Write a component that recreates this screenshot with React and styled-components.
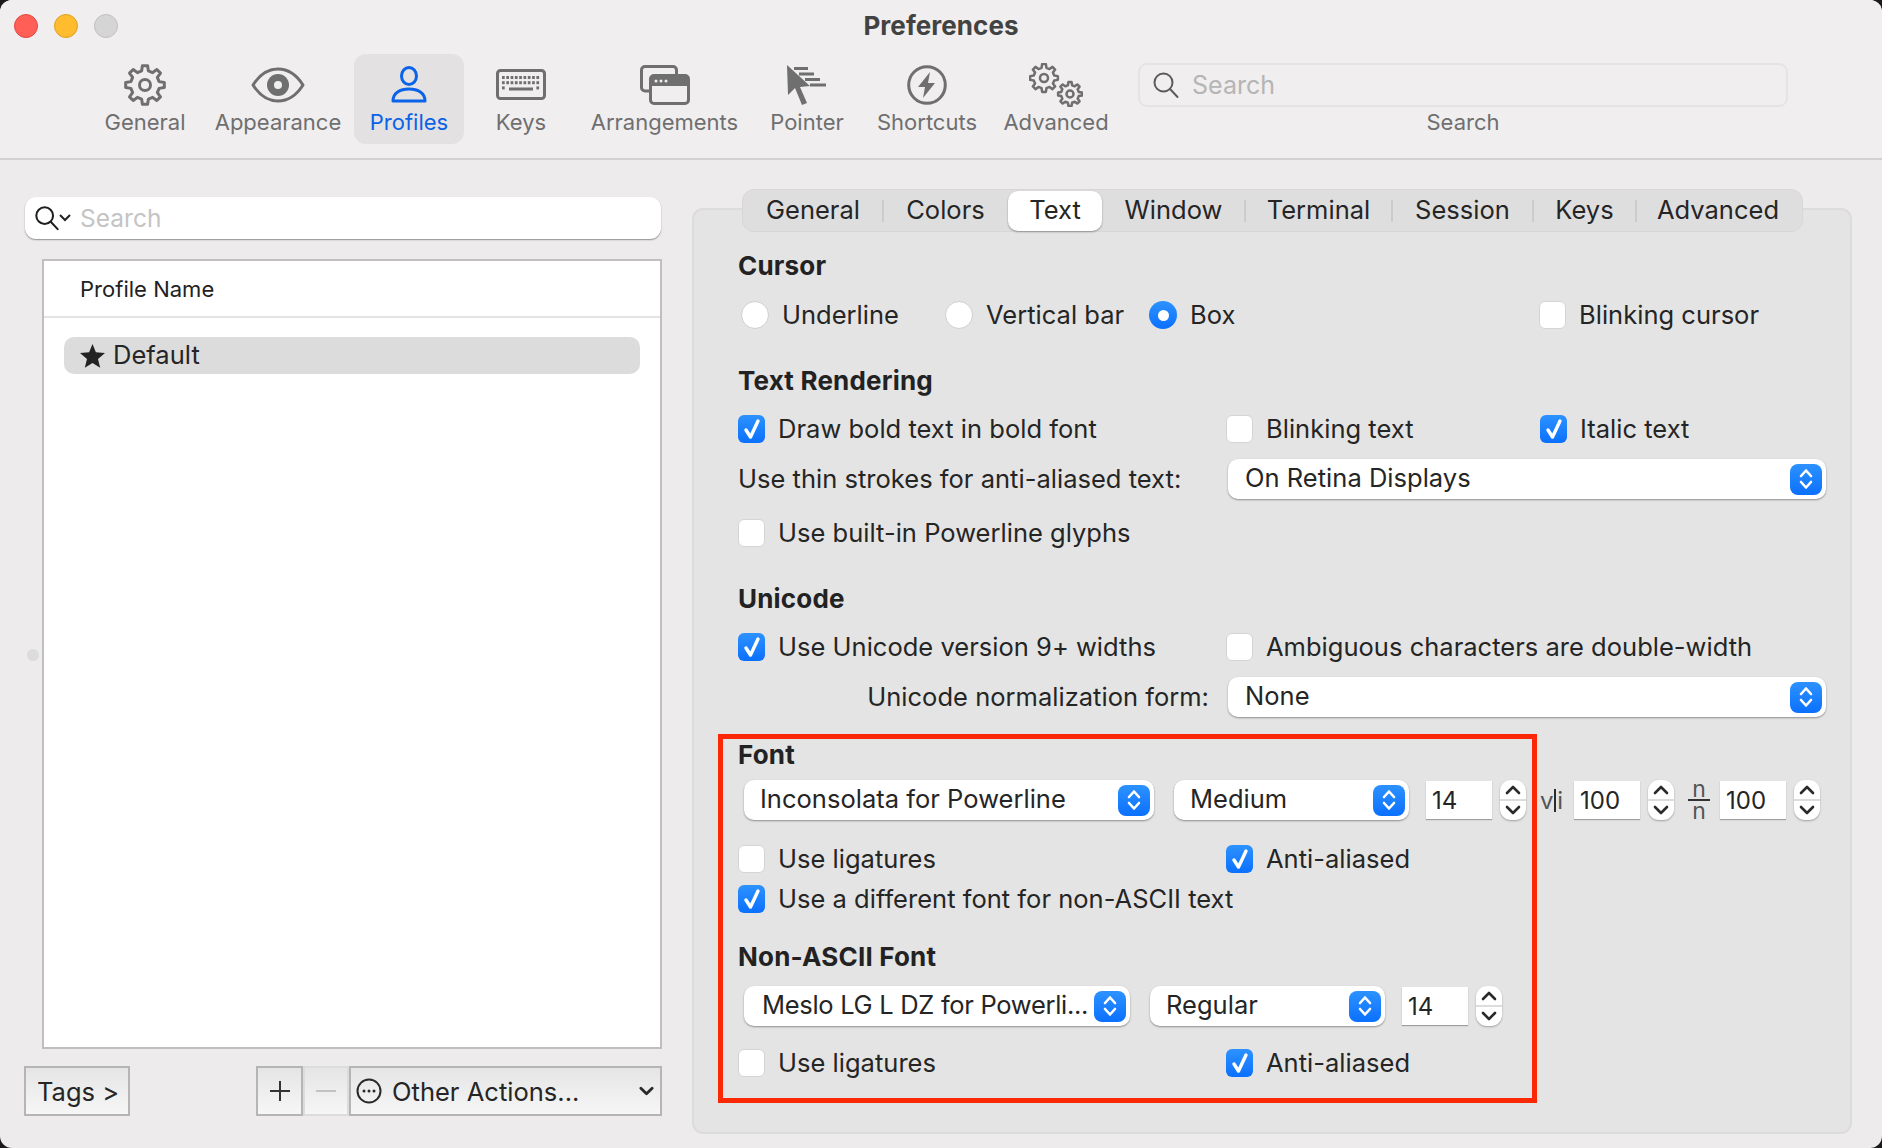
import React from "react";
import styled, { createGlobalStyle } from "styled-components";

const Global = createGlobalStyle`
  html, body { margin: 0; padding: 0; background: #1a1a1a; }
  * { box-sizing: border-box; }
`;

const ICON = "#6f6f6f";
const FONT = `Inter, "Liberation Sans", sans-serif`;

const Window = styled.div`
  width: 1882px;
  height: 1148px;
  overflow: hidden;
  border-radius: 12px;
  background: #edebec;
  font-family: ${FONT};
  color: #252525;
  font-size: 25.5px;
  letter-spacing: 0.02px;
  position: relative;
`;
const Toolbar = styled.header`
  height: 160px;
  background: #f0eeef;
  border-bottom: 2px solid #d2d0d1;
`;
const TitleBar = styled.div`
  height: 54px;
  padding: 0 14px;
  display: grid;
  grid-template-columns: 1fr auto 1fr;
  align-items: center;
`;
const Lights = styled.div`
  display: flex;
  gap: 16px;
  margin-top: -2px;
`;
const Light = styled.span`
  width: 24px;
  height: 24px;
  border-radius: 50%;
  background: ${(p) => p.$c};
  border: 1px solid ${(p) => p.$b};
`;
const Title = styled.div`
  font-weight: 700;
  font-size: 26px;
  letter-spacing: 0.05px;
  color: #424242;
  margin-top: -4px;
`;
const ToolRow = styled.div`
  display: flex;
  padding-left: 88px;
`;
const ToolItem = styled.div`
  width: ${(p) => p.$w}px;
  height: 90px;
  border-radius: 12px;
  background: ${(p) => (p.$active ? "#e3e1e2" : "transparent")};
  color: ${(p) => (p.$active ? "#0a63e8" : ICON)};
  display: flex;
  flex-direction: column;
  align-items: center;
  padding-top: 8px;
  flex: none;
`;
const IconSlot = styled.div`
  height: 46px;
  display: flex;
  align-items: center;
  justify-content: center;
`;
const ToolLabel = styled.div`
  font-size: 22px;
  line-height: 28px;
  letter-spacing: 0;
  white-space: nowrap;
`;
const SearchGroup = styled.div`
  margin-left: 17px;
  width: 650px;
  margin-top: 9px;
  display: flex;
  flex-direction: column;
  align-items: center;
`;
const TopSearch = styled.div`
  width: 100%;
  height: 44px;
  border: 2px solid #e5e3e4;
  border-radius: 9px;
  display: flex;
  align-items: center;
  padding-left: 12px;
  gap: 12px;
  color: #b5b5b5;
  font-size: 25px;
`;
const TopSearchLabel = styled.div`
  font-size: 22px;
  line-height: 28px;
  color: ${ICON};
  margin-top: 1px;
`;
const Main = styled.main`
  display: flex;
  height: 988px;
`;
const Left = styled.section`
  width: 638px;
  margin-left: 24px;
  padding-top: 37px;
  flex: none;
`;
const FilterBox = styled.div`
  height: 42px;
  margin-left: 1px;
  width: 636px;
  background: #fff;
  border-radius: 11px;
  box-shadow: 0 1px 1.5px rgba(0, 0, 0, 0.4);
  display: flex;
  align-items: center;
  padding-left: 9px;
  color: #c4c4c4;
  font-size: 24.5px;
  gap: 9px;
`;
const ListBox = styled.div`
  margin: 20px 0 17px 18px;
  width: 620px;
  height: 790px;
  background: #fff;
  border: 2px solid #bfbfbf;
`;
const ListHead = styled.div`
  height: 57px;
  border-bottom: 2px solid #e4e4e4;
  font-size: 22px;
  display: flex;
  align-items: center;
  padding: 1px 0 0 36px;
  color: #222;
`;
const ListRow = styled.div`
  margin: 19px 0 0 20px;
  width: 576px;
  height: 37px;
  background: #dcdcdc;
  border-radius: 10px;
  display: flex;
  align-items: center;
  padding-left: 16px;
  gap: 8px;
`;
const RowText = styled.span`
  margin-top: -2px;
`;
const BottomBar = styled.div`
  display: flex;
  height: 50px;
`;
const BarButton = styled.div`
  height: 50px;
  width: ${(p) => p.$w}px;
  margin-right: ${(p) => p.$mr || 0}px;
  border: 2px solid ${(p) => (p.$dim ? "#dcdcdc" : "#b5b5b5")};
  background: linear-gradient(#e5e5e5, #f6f6f6);
  display: flex;
  align-items: center;
  justify-content: ${(p) => (p.$center ? "center" : "flex-start")};
  padding: ${(p) => (p.$center ? "0" : "0 6px 0 11px")};
  gap: 10px;
  flex: none;
  white-space: nowrap;
`;
const Grow = styled.span`
  flex: 1;
`;
const Right = styled.section`
  width: 1160px;
  margin-left: 30px;
  flex: none;
`;
const Panel = styled.div`
  position: relative;
  margin-top: 48px;
  height: 926px;
  background: #e4e4e4;
  border: 2px solid #dddcdc;
  border-radius: 11px;
  padding-left: 44px;
`;
const Tabs = styled.nav`
  display: flex;
  align-items: center;
  margin: -21px 0 0 4px;
  width: 1061px;
  height: 43px;
  background: #dfdedf;
  border: 1px solid #d8d7d7;
  border-radius: 12px;
`;
const Tab = styled.div`
  position: relative;
  width: ${(p) => p.$w}px;
  height: 40px;
  padding-bottom: 2px;
  display: flex;
  align-items: center;
  justify-content: center;
  flex: none;
  background: ${(p) => (p.$active ? "#fff" : "transparent")};
  border-radius: 10px;
  box-shadow: ${(p) => (p.$active ? "0 1px 2px rgba(0,0,0,.35)" : "none")};
  &::after {
    content: "";
    display: ${(p) => (p.$sep ? "block" : "none")};
    position: absolute;
    right: -1px;
    top: 9px;
    width: 2px;
    height: 22px;
    background: #cdcccc;
  }
`;
const Row = styled.div`
  margin-top: ${(p) => p.$mt}px;
  height: ${(p) => p.$h || 30}px;
  display: flex;
  align-items: center;
  white-space: nowrap;
`;
const Heading = styled.h3`
  margin: ${(p) => p.$mt}px 0 0;
  height: 30px;
  line-height: 30px;
  font-size: 26px;
  font-weight: 700;
  letter-spacing: 0.2px;
  color: #222;
`;
const Cols = styled.div`
  margin-top: ${(p) => p.$mt}px;
  height: 30px;
  display: grid;
  grid-template-columns: 488px 314px 1fr;
  align-items: center;
  white-space: nowrap;
`;
const Option = styled.label`
  display: flex;
  align-items: center;
  gap: 13px;
  width: ${(p) => (p.$w ? `${p.$w}px` : "auto")};
  flex: none;
`;
const OptionText = styled.span`
  margin-top: -2px;
`;
const RowIndent = styled.span`
  width: 3px;
  flex: none;
`;
const RadioDot = styled.span`
  width: 28px;
  height: 28px;
  border-radius: 50%;
  flex: none;
  background: ${(p) => (p.$on ? "linear-gradient(#2d92ff,#0b70fd)" : "#fff")};
  border: ${(p) => (p.$on ? "0" : "1px solid #cfcfcf")};
  display: flex;
  align-items: center;
  justify-content: center;
  &::after {
    content: "";
    display: ${(p) => (p.$on ? "block" : "none")};
    width: 11px;
    height: 11px;
    border-radius: 50%;
    background: #fff;
  }
`;
const Box = styled.span`
  width: 27px;
  height: 28px;
  border-radius: 6px;
  flex: none;
  background: ${(p) => (p.$on ? "linear-gradient(#2d92ff,#0b70fd)" : "#fff")};
  border: ${(p) => (p.$on ? "0" : "1px solid #d4d4d4")};
  display: flex;
  align-items: center;
  justify-content: center;
`;
const SelectWrap = styled.div`
  width: ${(p) => p.$w}px;
  margin-left: ${(p) => p.$ml || 0}px;
  height: 40px;
  background: #fff;
  border-radius: 10px;
  box-shadow: 0 1px 2px rgba(0, 0, 0, 0.38);
  display: flex;
  align-items: center;
  padding: 0 4px 0 ${(p) => p.$pl || 17}px;
  flex: none;
`;
const SelectText = styled.span`
  flex: 1;
  min-width: 0;
  white-space: nowrap;
  margin-top: -3px;
  letter-spacing: ${(p) => (p.$tight ? "-0.3px" : "inherit")};
`;
const Indicator = styled.span`
  width: 32px;
  height: 31px;
  border-radius: 8px;
  background: linear-gradient(#2d92ff, #0b70fd);
  display: flex;
  align-items: center;
  justify-content: center;
  flex: none;
`;
const Field = styled.div`
  width: ${(p) => p.$w}px;
  margin-left: ${(p) => p.$ml}px;
  height: 38px;
  background: #fff;
  box-shadow: 0 1px 1px rgba(0, 0, 0, 0.3);
  font-size: 24px;
  display: flex;
  align-items: center;
  padding-left: 6px;
  flex: none;
`;
const StepperWrap = styled.div`
  width: 26px;
  margin-left: ${(p) => p.$ml}px;
  height: 40px;
  background: #fff;
  border-radius: 11px;
  box-shadow: 0 1px 2px rgba(0, 0, 0, 0.3);
  display: flex;
  flex-direction: column;
  align-items: center;
  justify-content: space-between;
  padding: 5px 0;
  position: relative;
  flex: none;
  &::after {
    content: "";
    position: absolute;
    left: 0;
    right: 0;
    top: 19px;
    height: 2px;
    background: #dcdcdc;
  }
`;
const SpacingGlyph = styled.span`
  width: 23px;
  margin-left: 14px;
  font-size: 24px;
  color: #555;
  flex: none;
  display: flex;
  align-items: center;
  justify-content: space-between;
  letter-spacing: 0;
`;
const SpacingBar = styled.span`
  width: 2px;
  height: 23px;
  background: #2b2b2b;
`;
const FracGlyph = styled.span`
  width: 22px;
  margin-left: 14px;
  flex: none;
  display: flex;
  flex-direction: column;
  align-items: center;
  font-size: 23px;
  line-height: 16px;
  color: #555;
`;
const FracLine = styled.span`
  width: 22px;
  height: 2px;
  background: #333;
  margin: 2px 0;
`;
const Highlight = styled.div`
  position: absolute;
  left: 24px;
  top: 524px;
  width: 819px;
  height: 369px;
  border: 5px solid #fb2806;
  pointer-events: none;
`;
const SplitDot = styled.span`
  position: absolute;
  left: 27px;
  top: 649px;
  width: 12px;
  height: 12px;
  border-radius: 50%;
  background: #dcdcdc;
`;
const FormLabel = styled.span`
  width: ${(p) => p.$w}px;
  text-align: ${(p) => (p.$right ? "right" : "left")};
  flex: none;
  margin-top: -2px;
`;

function gearPath(cx, cy, R, r, n) {
  const pts = [];
  const step = (Math.PI * 2) / n;
  for (let i = 0; i < n; i++) {
    const a = i * step - Math.PI / 2;
    const p = (ang, rad) => `${(cx + Math.cos(ang) * rad).toFixed(2)} ${(cy + Math.sin(ang) * rad).toFixed(2)}`;
    pts.push(p(a - step * 0.3, r), p(a - step * 0.17, R), p(a + step * 0.17, R), p(a + step * 0.3, r));
  }
  return "M" + pts.join("L") + "Z";
}

const GearIcon = () => (
  <svg width="44" height="44" viewBox="0 0 44 44" fill="none" stroke="currentColor" strokeWidth="3" strokeLinejoin="round">
    <path d={gearPath(22, 22, 19.5, 14.5, 8)} />
    <circle cx="22" cy="22" r="5.5" />
  </svg>
);
const EyeIcon = () => (
  <svg width="54" height="36" viewBox="0 0 54 36" fill="none">
    <path d="M2 18C9 7 17 2 27 2s18 5 25 16c-7 11-15 16-25 16S9 29 2 18Z" stroke="currentColor" strokeWidth="3" strokeLinejoin="round" />
    <circle cx="27" cy="18" r="11" fill="currentColor" />
    <circle cx="27" cy="18" r="4" fill="#f0eeef" />
  </svg>
);
const PersonIcon = () => (
  <svg width="36" height="38" viewBox="0 0 36 38" fill="none" stroke="currentColor" strokeWidth="3" strokeLinejoin="round">
    <ellipse cx="18" cy="10" rx="7.5" ry="8.5" />
    <path d="M2 35c0-8 7-12 16-12s16 4 16 12Z" />
  </svg>
);
const KeyboardIcon = () => {
  const keys = [];
  for (let r = 0; r < 3; r++) {
    for (let c = 0; c < 9; c++) {
      if (r === 2 && c > 0 && c < 8) continue;
      keys.push(<rect key={`${r}-${c}`} x={6 + c * 4.3} y={7 + r * 5.2} width="2.7" height="3" />);
    }
  }
  return (
    <svg width="50" height="32" viewBox="0 0 50 32">
      <rect x="1.5" y="1.5" width="47" height="28" rx="3" fill="none" stroke="currentColor" strokeWidth="3" />
      <g fill="currentColor">
        {keys}
        <rect x="13" y="18.5" width="24" height="3" />
      </g>
    </svg>
  );
};
const WindowsIcon = () => (
  <svg width="50" height="40" viewBox="0 0 50 40" fill="none">
    <path d="M10 26H5a3.5 3.5 0 0 1-3.5-3.5V5A3.5 3.5 0 0 1 5 1.500h28A3.500 3.500 0 0 1 36.500 5v4" stroke="currentColor" strokeWidth="3" />
    <rect x="10.500" y="10.500" width="38" height="28" rx="3.500" fill="#f0eeef" stroke="currentColor" strokeWidth="3" />
    <path d="M10.500 14a3.500 3.500 0 0 1 3.500-3.500h31a3.500 3.500 0 0 1 3.500 3.500v7h-38Z" fill="currentColor" />
    <g fill="#f0eeef">
      <circle cx="16" cy="16" r="1.500" />
      <circle cx="21" cy="16" r="1.500" />
      <circle cx="26" cy="16" r="1.500" />
    </g>
  </svg>
);
const PointerIcon = () => (
  <svg width="40" height="41" viewBox="0 0 40 41" fill="currentColor">
    <path d="M0 0 1 30 8 23 15 40 20 38 13 22 23 21Z" />
    <rect x="7" y="2" width="14" height="3" />
    <rect x="12" y="7.500" width="15" height="3" />
    <rect x="18" y="13" width="15" height="3" />
    <rect x="23" y="18.500" width="16" height="3" />
  </svg>
);
const BoltIcon = () => (
  <svg width="40" height="40" viewBox="0 0 40 40">
    <circle cx="20" cy="20" r="18.300" fill="none" stroke="currentColor" strokeWidth="3" />
    <path d="M23 7 11 22h7l-2 11 12-15h-7Z" fill="currentColor" />
  </svg>
);
const GearsIcon = () => (
  <svg width="54" height="44" viewBox="0 0 54 44" fill="none" stroke="currentColor" strokeWidth="2.500" strokeLinejoin="round">
    <path d={gearPath(15, 15, 14, 10.500, 8)} />
    <circle cx="15" cy="15" r="4" />
    <path d={gearPath(41, 31, 12, 9, 8)} />
    <circle cx="41" cy="31" r="3.500" />
  </svg>
);
const Magnifier = ({ size = 28, color = "#5b5b5b", w = 2 }) => (
  <svg width={size} height={size} viewBox="0 0 28 28" fill="none" stroke={color} strokeWidth={w} strokeLinecap="round" style={{ flex: "none" }}>
    <circle cx="11.500" cy="11.500" r="9" />
    <path d="m18 18 7.500 8" />
  </svg>
);
const Check = () => (
  <svg width="18" height="22" viewBox="0 0 18 22" fill="none" stroke="#fff" strokeWidth="3.400" strokeLinecap="round" strokeLinejoin="round">
    <path d="M3 12l4.500 7L15 3" />
  </svg>
);
const UpDown = () => (
  <svg width="16" height="24" viewBox="0 0 16 24" fill="none" stroke="#fff" strokeWidth="2.600" strokeLinecap="round" strokeLinejoin="round">
    <path d="M3 9l5-5.500L13 9M3 15l5 5.500L13 15" />
  </svg>
);
const Chevron = ({ up, w = 16, sw = 2.6 }) => (
  <svg width={w} height="10" viewBox="0 0 16 10" fill="none" stroke="#2a2a2a" strokeWidth={sw} strokeLinecap="round" strokeLinejoin="round">
    <path d={up ? "M2 8l6-6 6 6" : "M2 2l6 6 6-6"} />
  </svg>
);
const Star = () => (
  <svg width="25" height="24" viewBox="0 0 25 24" fill="#232323" style={{ flex: "none" }}>
    <path d="M12.500 0l3.400 8.300 9.100.7-7 5.900 2.200 8.900-7.700-4.800-7.700 4.800 2.200-8.900-7-5.900 9.100-.7Z" />
  </svg>
);

const Radio = ({ on, w, children }) => (
  <Option $w={w}>
    <RadioDot $on={on} />
    <OptionText>{children}</OptionText>
  </Option>
);
const Checkbox = ({ on, children }) => (
  <Option>
    <Box $on={on}>{on && <Check />}</Box>
    <OptionText>{children}</OptionText>
  </Option>
);
const Select = ({ w, ml, pl, tight, children }) => (
  <SelectWrap $w={w} $ml={ml} $pl={pl}>
    <SelectText $tight={tight}>{children}</SelectText>
    <Indicator>
      <UpDown />
    </Indicator>
  </SelectWrap>
);
const Stepper = ({ ml }) => (
  <StepperWrap $ml={ml}>
    <Chevron up />
    <Chevron />
  </StepperWrap>
);

const tools = [
  ["General", 114, <GearIcon />],
  ["Appearance", 152, <EyeIcon />],
  ["Profiles", 110, <PersonIcon />, true],
  ["Keys", 114, <KeyboardIcon />],
  ["Arrangements", 173, <WindowsIcon />],
  ["Pointer", 112, <PointerIcon />],
  ["Shortcuts", 128, <BoltIcon />],
  ["Advanced", 130, <GearsIcon />],
];
const tabs = [
  ["General", 140, true],
  ["Colors", 125, false],
  ["Text", 94, false, true],
  ["Window", 143, true],
  ["Terminal", 147, true],
  ["Session", 141, true],
  ["Keys", 103, true],
  ["Advanced", 164, false],
];

export default function App() {
  return (
    <Window>
      <Global />
      <Toolbar>
        <TitleBar>
          <Lights>
            <Light $c="#ff5f57" $b="#e2463f" />
            <Light $c="#febc2e" $b="#dea123" />
            <Light $c="#d6d5d5" $b="#c1c0c0" />
          </Lights>
          <Title>Preferences</Title>
          <span />
        </TitleBar>
        <ToolRow>
          {tools.map(([label, w, icon, active]) => (
            <ToolItem key={label} $w={w} $active={active}>
              <IconSlot>{icon}</IconSlot>
              <ToolLabel>{label}</ToolLabel>
            </ToolItem>
          ))}
          <SearchGroup>
            <TopSearch>
              <Magnifier />
              Search
            </TopSearch>
            <TopSearchLabel>Search</TopSearchLabel>
          </SearchGroup>
        </ToolRow>
      </Toolbar>
      <Main>
        <SplitDot />
        <Left>
          <FilterBox>
            <Magnifier size={26} color="#1f1f1f" w={2.2} />
            <svg width="12" height="8" viewBox="0 0 12 8" fill="none" stroke="#222" strokeWidth="2" style={{ marginLeft: -10 }}>
              <path d="M1 1l5 5 5-5" />
            </svg>
            Search
          </FilterBox>
          <ListBox>
            <ListHead>Profile Name</ListHead>
            <ListRow>
              <Star />
              <RowText>Default</RowText>
            </ListRow>
          </ListBox>
          <BottomBar>
            <BarButton $w={106} $mr={126}>Tags &gt;</BarButton>
            <BarButton $w={47} $center>
              <svg width="22" height="22" viewBox="0 0 22 22" stroke="#333" strokeWidth="2">
                <path d="M11 1v20M1 11h20" />
              </svg>
            </BarButton>
            <BarButton $w={46} $center $dim>
              <svg width="22" height="4" viewBox="0 0 22 4" stroke="#c2c2c2" strokeWidth="2">
                <path d="M1 2h20" />
              </svg>
            </BarButton>
            <BarButton $w={313}>
              <svg width="26" height="26" viewBox="0 0 26 26" style={{ marginLeft: -6, flex: "none" }}>
                <circle cx="13" cy="13" r="11.500" fill="none" stroke="#2a2a2a" strokeWidth="2" />
                <g fill="#2a2a2a">
                  <circle cx="8" cy="13" r="1.500" />
                  <circle cx="13" cy="13" r="1.500" />
                  <circle cx="18" cy="13" r="1.500" />
                </g>
              </svg>
              Other Actions...
              <Grow />
              <Chevron w={15} sw={3} />
            </BarButton>
          </BottomBar>
        </Left>
        <Right>
          <Panel>
            <Tabs>
              {tabs.map(([label, w, sep, active]) => (
                <Tab key={label} $w={w} $sep={sep} $active={active}>
                  {label}
                </Tab>
              ))}
            </Tabs>
            <Heading $mt={19}>Cursor</Heading>
            <Row $mt={19}>
              <RowIndent />
              <Radio w={204}>Underline</Radio>
              <Radio w={204}>Vertical bar</Radio>
              <Radio on w={390}>Box</Radio>
              <Checkbox>Blinking cursor</Checkbox>
            </Row>
            <Heading $mt={36}>Text Rendering</Heading>
            <Cols $mt={18}>
              <Checkbox on>Draw bold text in bold font</Checkbox>
              <Checkbox>Blinking text</Checkbox>
              <Checkbox on>Italic text</Checkbox>
            </Cols>
            <Row $mt={15} $h={40}>
              <FormLabel $w={490}>Use thin strokes for anti-aliased text:</FormLabel>
              <Select w={598}>On Retina Displays</Select>
            </Row>
            <Cols $mt={19}>
              <Checkbox>Use built-in Powerline glyphs</Checkbox>
            </Cols>
            <Heading $mt={36}>Unicode</Heading>
            <Cols $mt={18}>
              <Checkbox on>Use Unicode version 9+ widths</Checkbox>
              <Checkbox>Ambiguous characters are double-width</Checkbox>
            </Cols>
            <Row $mt={15} $h={40}>
              <FormLabel $w={471} $right>Unicode normalization form:</FormLabel>
              <Select w={598} ml={19}>None</Select>
            </Row>
            <Heading $mt={23}>Font</Heading>
            <Row $mt={10} $h={40}>
              <Select w={410} ml={6} pl={16}>Inconsolata for Powerline</Select>
              <Select w={235} ml={20} pl={16}>Medium</Select>
              <Field $w={66} $ml={17}>14</Field>
              <Stepper ml={8} />
              <SpacingGlyph>
                v
                <SpacingBar />
                i
              </SpacingGlyph>
              <Field $w={66} $ml={11}>100</Field>
              <Stepper ml={8} />
              <FracGlyph>
                n
                <FracLine />
                n
              </FracGlyph>
              <Field $w={66} $ml={10}>100</Field>
              <Stepper ml={8} />
            </Row>
            <Cols $mt={24}>
              <Checkbox>Use ligatures</Checkbox>
              <Checkbox on>Anti-aliased</Checkbox>
            </Cols>
            <Cols $mt={10}>
              <Checkbox on>Use a different font for non-ASCII text</Checkbox>
            </Cols>
            <Heading $mt={28}>Non-ASCII Font</Heading>
            <Row $mt={14} $h={40}>
              <Select w={386} ml={6} pl={18} tight>Meslo LG L DZ for Powerli...</Select>
              <Select w={235} ml={20} pl={16}>Regular</Select>
              <Field $w={66} $ml={17}>14</Field>
              <Stepper ml={8} />
            </Row>
            <Cols $mt={22}>
              <Checkbox>Use ligatures</Checkbox>
              <Checkbox on>Anti-aliased</Checkbox>
            </Cols>
            <Highlight />
          </Panel>
        </Right>
      </Main>
    </Window>
  );
}
